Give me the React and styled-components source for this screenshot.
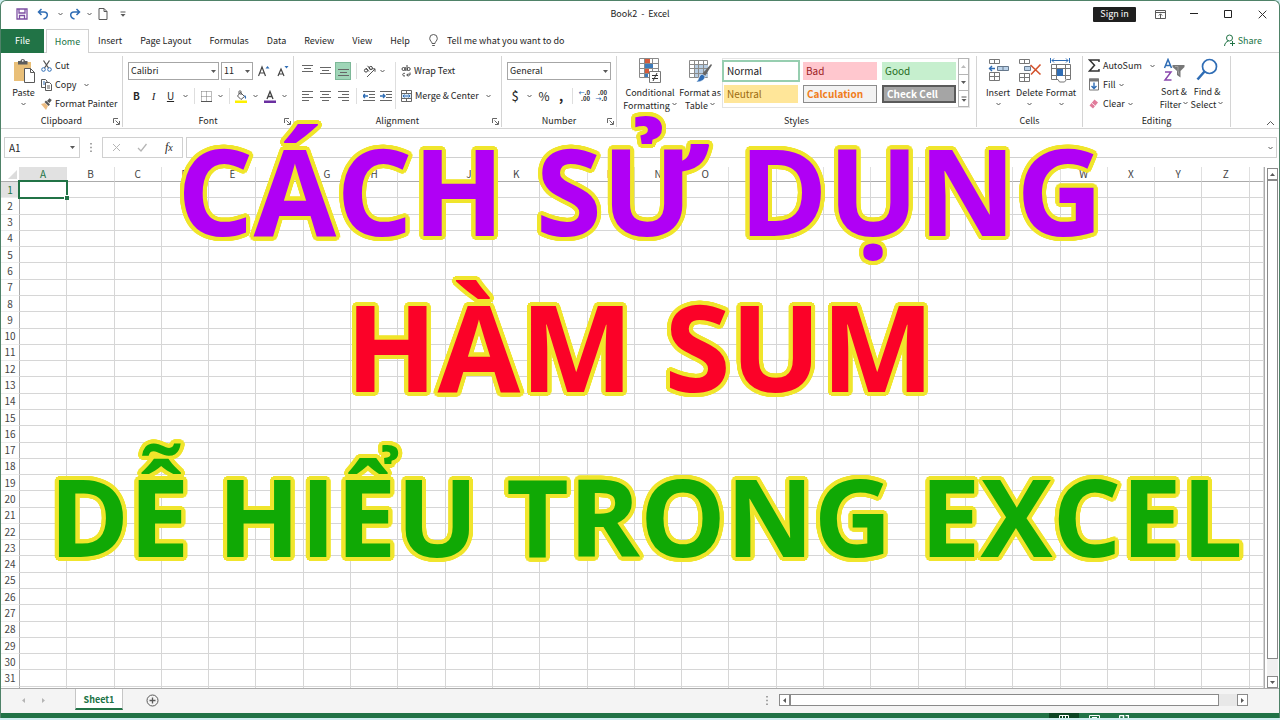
import React from "react";
import styled, { createGlobalStyle, css } from "styled-components";

const GlobalStyle = createGlobalStyle`
  *, *::before, *::after { box-sizing: border-box; }
  body { margin: 0; background: #cfeef0; }
  body, button, input, select {
    font-family: "Noto Sans CJK SC", "Noto Sans", sans-serif;
    font-size: 9px;
    line-height: 12px;
    color: #262626;
  }
  button, input, select { margin: 0; padding: 0; border: 0; background: none; }
  button { white-space: nowrap; }
`;

const green = "#217346";
const grey = "#595959";
const blue = "#2f6db5";

/* ---------- window ---------- */

const Window = styled.div`
  position: relative;
  display: flex;
  flex-direction: column;
  min-height: calc(100vh - 2px);
  border: 1px solid #4f8268;
  border-bottom: 0;
  border-radius: 6px 6px 0 0;
  background: #fff;
  overflow: hidden;
`;

const TitleBar = styled.header`
  display: grid;
  grid-template-columns: 1fr auto 1fr;
  align-items: center;
  height: 28px;
  padding-bottom: 2px;
`;

const QuickAccess = styled.div`
  display: flex;
  align-items: center;
  padding-left: 15px;
  gap: 3px;
`;

const IconButton = styled.button`
  display: flex;
  align-items: center;
  justify-content: center;
  flex: none;
  width: ${(p) => p.$w || 16}px;
  height: ${(p) => p.$h || 18}px;
  ${(p) =>
    p.$on &&
    css`
      background: #9fd5b7;
      border: 1px solid #7db898;
    `}
`;

const Title = styled.div`
  white-space: pre;
`;

const WindowButtons = styled.div`
  display: flex;
  align-items: center;
  justify-content: flex-end;
`;

const SignIn = styled.button`
  height: 15px;
  width: 43px;
  margin-right: 7px;
  border-radius: 1px;
  background: #1f1f1f;
  color: #fff;
`;

/* ---------- tabs ---------- */

const TabBar = styled.nav`
  display: flex;
  height: 24px;
  border-bottom: 1px solid #d0d0d0;
`;

const Tab = styled.button`
  padding: 0 9px;
  height: 24px;
`;

const FileTab = styled(Tab)`
  width: 43px;
  padding: 0;
  margin-right: 2px;
  background: ${green};
  color: #fff;
`;

const ActiveTab = styled(Tab)`
  width: 43px;
  padding: 0;
  border: 1px solid #d0d0d0;
  border-bottom: 0;
  background: #fff;
  color: ${green};
`;

const TellMe = styled.button`
  display: flex;
  align-items: center;
  gap: 9px;
  margin-left: 10px;
`;

const Share = styled.button`
  display: flex;
  align-items: center;
  gap: 3px;
  margin: 0 17px 0 auto;
  color: ${green};
`;

/* ---------- ribbon ---------- */

const Ribbon = styled.div`
  display: flex;
  position: relative;
  height: 76px;
  padding: 3px 0 1px;
  border-bottom: 1px solid #d4d4d4;
`;

const GroupBox = styled.section`
  display: flex;
  flex-direction: column;
  flex: none;
  width: ${(p) => p.$w}px;
  border-right: 1px solid #d4d4d4;
`;

const GroupBody = styled.div`
  display: flex;
  flex: 1;
  padding: 0 5px;
`;

const GroupFooter = styled.div`
  position: relative;
  height: 12px;
  text-align: center;
`;

const Launcher = styled.button`
  position: absolute;
  right: 1px;
  top: 3px;
  width: 8px;
  height: 8px;
  display: flex;
`;

const BigButton = styled.button`
  display: flex;
  flex-direction: column;
  align-items: center;
  flex: none;
  width: ${(p) => p.$w}px;
  padding-top: 2px;
  line-height: 13px;
  svg:first-child { margin-bottom: 3px; }
`;

const WordLine = styled.span`
  display: flex;
  align-items: center;
  justify-content: center;
  gap: 2px;
  height: 13px;
`;

const Stack = styled.div`
  display: flex;
  flex-direction: column;
  width: ${(p) => p.$w}px;
`;

const SmallButton = styled.button`
  display: flex;
  align-items: center;
  gap: 3px;
  height: 19px;
  svg:last-child { margin-left: ${(p) => p.$gap || 0}px; }
`;

const Rows = styled.div`
  display: flex;
  flex-direction: column;
  gap: 7px;
  padding-top: 6px;
`;

const Row = styled.div`
  display: flex;
  align-items: center;
  gap: ${(p) => p.$gap || 0}px;
  height: 18px;
`;

const Divider = styled.span`
  width: 1px;
  height: 16px;
  margin: 0 3px;
  background: #dedede;
`;

const TallDivider = styled.span`
  width: 1px;
  margin: 6px 5px 6px 1px;
  background: #dedede;
`;

const SelectBox = styled.label`
  position: relative;
  display: block;
  width: ${(p) => p.$w}px;
  height: 18px;
  border: 1px solid #a6a6a6;
  select {
    appearance: none;
    width: 100%;
    height: 16px;
    padding-left: 2px;
    outline: 0;
  }
  svg { position: absolute; right: 2px; top: 6px; pointer-events: none; }
`;

const Glyph = styled.span`
  font-size: ${(p) => p.$size || 10}px;
  font-weight: ${(p) => (p.$bold ? 700 : 400)};
  font-style: ${(p) => (p.$italic ? "italic" : "normal")};
  font-family: ${(p) => (p.$serif ? '"Liberation Serif", serif' : "inherit")};
  text-decoration: ${(p) => (p.$underline ? "underline" : "none")};
`;

/* ---------- style gallery ---------- */

const Gallery = styled.div`
  display: flex;
  height: 50px;
  margin-top: 2px;
  border: 1px solid #e3e3e3;
`;

const Swatches = styled.div`
  display: grid;
  grid-template-columns: repeat(3, 74px);
  grid-auto-rows: 18px;
  gap: 5px;
  padding: 3px 2px 4px 1px;
`;

const Swatch = styled.button`
  padding-left: 3px;
  text-align: left;
  font-size: 10px;
  background: ${(p) => p.$bg};
  color: ${(p) => p.$fg};
  font-weight: ${(p) => (p.$bold ? 700 : 400)};
  border: ${(p) => p.$border || "0"};
  outline: ${(p) => (p.$selected ? "2px solid #97ceb0" : "0")};
`;

const GalleryScroll = styled.div`
  display: flex;
  flex-direction: column;
  width: 11px;
  button {
    flex: 1;
    display: flex;
    align-items: center;
    justify-content: center;
    border: 1px solid #b5b5b5;
    margin-top: -1px;
  }
`;

const Collapse = styled.button`
  position: absolute;
  right: 4px;
  bottom: 2px;
  display: flex;
`;

/* ---------- formula bar ---------- */

const FormulaBar = styled.div`
  display: flex;
  align-items: flex-start;
  height: 38px;
  padding: 8px 2px 0 3px;
`;

const NameBox = styled.label`
  position: relative;
  width: 76px;
  height: 21px;
  border: 1px solid #d0d0d0;
  input { width: 60px; height: 19px; padding-left: 4px; outline: 0; font-size: 10px; }
  svg { position: absolute; right: 4px; top: 7px; }
`;

const Dots = styled.span`
  display: flex;
  align-items: center;
  justify-content: center;
  width: ${(p) => p.$w || 22}px;
  height: 21px;
`;

const EntryButtons = styled.div`
  display: flex;
  align-items: center;
  justify-content: space-around;
  width: 81px;
  height: 21px;
  margin-right: 3px;
  border: 1px solid #d0d0d0;
`;

const FormulaInput = styled.label`
  position: relative;
  flex: 1;
  height: 21px;
  border: 1px solid #d0d0d0;
  input { width: 95%; height: 19px; outline: 0; }
  svg { position: absolute; right: 3px; top: 8px; }
`;

/* ---------- grid ---------- */

const SheetArea = styled.main`
  display: flex;
  flex: 1;
`;

const Sheet = styled.table`
  flex: 1;
  width: 100%;
  table-layout: fixed;
  border-collapse: separate;
  border-spacing: 0;
  border-right: 1px solid #ababab;
  font-size: 10px;
  line-height: 12px;
  color: #444;
  th { padding: 0; font-weight: 400; }
  thead th {
    height: 15px;
    border-right: 1px solid #e0e0e0;
    border-bottom: 1px solid #ababab;
  }
  tbody th {
    height: 16px;
    border-right: 1px solid #ababab;
    border-bottom: 1px solid #ececec;
  }
  td {
    padding: 0;
    border-right: 1px solid #d6d6d6;
    border-bottom: 1px solid #d6d6d6;
  }
  tbody tr:last-child > * { height: 1px; border-bottom: 0; }
`;

const HeadCell = styled.th`
  ${(p) => p.$on && css`background: #e1e1e1; color: ${green};`}
`;

const Corner = styled.th`
  svg { display: block; margin: 3px 2px 2px auto; }
`;

const Cell = styled.td`
  ${(p) =>
    p.$selected &&
    css`
      position: relative;
      &::before {
        content: "";
        position: absolute;
        inset: -2px;
        border: 2px solid ${green};
      }
      &::after {
        content: "";
        position: absolute;
        right: -3px;
        bottom: -3px;
        width: 5px;
        height: 5px;
        background: ${green};
        border: 1px solid #fff;
        border-width: 1px 0 0 1px;
      }
    `}
`;

const VScroll = styled.div`
  display: flex;
  flex-direction: column;
  flex: none;
  width: 14px;
  padding: 1px 1px 0 2px;
`;

const ScrollButton = styled.button`
  display: flex;
  align-items: center;
  justify-content: center;
  flex: none;
  width: 11px;
  height: 12px;
  border: 1px solid #8a8a8a;
  background: #fff;
`;

const VTrack = styled.div`
  flex: 1;
  padding-bottom: 17px;
  background: #f0f0f0;
`;

const Thumb = styled.div`
  height: 100%;
  border: 1px solid #8a8a8a;
  background: #fff;
`;

/* ---------- footer ---------- */

const SheetBar = styled.footer`
  display: flex;
  height: 25px;
  border-top: 1px solid #ababab;
  background: #f4f4f4;
`;

const SheetNav = styled.div`
  display: flex;
  align-items: center;
  justify-content: center;
  gap: 4px;
  width: 74px;
  padding-right: 10px;
  height: 22px;
`;

const SheetTab = styled.button`
  width: 48px;
  height: 21px;
  padding-top: 3px;
  border: solid #c6c6c6;
  border-width: 0 1px;
  border-bottom: 2px solid ${green};
  background: #fff;
  color: ${green};
  font-size: 9px;
  font-weight: 700;
`;

const AddSheet = styled.button`
  display: flex;
  align-items: center;
  height: 22px;
  margin-left: 23px;
`;

const HScroll = styled.div`
  display: flex;
  align-items: center;
  width: 41%;
  height: 22px;
  margin-left: auto;
  padding-right: 31px;
`;

const HTrack = styled.div`
  flex: 1;
  height: 12px;
  padding-right: 18px;
  background: #e8e8e8;
`;

const StatusBar = styled.div`
  display: flex;
  justify-content: flex-end;
  height: 5px;
  padding-right: 110px;
  background: ${green};
  overflow: hidden;
`;

const ViewMode = styled.button`
  display: flex;
  justify-content: center;
  width: 30px;
  padding-top: 2px;
  background: ${(p) => (p.$on ? "#0c4523" : "none")};
`;

/* ---------- headline ---------- */

const outline = [
  [4, 0], [4, 1], [3, 2], [3, 3], [2, 3], [1, 4], [0, 4],
]
  .flatMap(([x, y]) => [[x, y], [-x, y], [x, -y], [-x, -y]])
  .map(([x, y]) => `${x}px ${y}px 0 #f0e52c`)
  .join(", ");

const Headline = styled.h1`
  position: absolute;
  inset: 0;
  margin: 0;
  padding-top: 111px;
  display: flex;
  flex-direction: column;
  align-items: center;
  font-family: "Open Sans", "Noto Sans", sans-serif;
  font-weight: 700;
  white-space: nowrap;
  pointer-events: none;
`;

const HeadlineRow = styled.span`
  font-size: ${(p) => p.$size}px;
  line-height: 156px;
  color: ${(p) => p.$color};
  text-shadow: ${outline};
  &:last-child { margin: 14px 0 0 12px; }
`;

/* ---------- icons ---------- */

const Svg = ({ w = 12, h = w, children, ...rest }) => (
  <svg width={w} height={h} viewBox={`0 0 ${w} ${h}`} fill="none" stroke={grey} aria-hidden="true" {...rest}>
    {children}
  </svg>
);

const Chevron = () => (
  <Svg w={5} h={4}><path d="M.5 1l2 2 2-2" /></Svg>
);
const Caret = ({ dir = "down", color = grey }) => {
  const d = { down: "M0 1h5L2.500 4z", up: "M0 4h5L2.500 1z", left: "M4 0v5L1 2.500z", right: "M1 0v5l3-2.500z" }[dir];
  return <Svg w={5}><path d={d} fill={color} stroke="none" /></Svg>;
};
const MoreCaret = () => (
  <Svg w={6} h={6}><path d="M.5 1h5" /><path d="M.5 3h5L3 5.800z" fill={grey} stroke="none" /></Svg>
);
const SaveIcon = () => (
  <Svg w={12} stroke="#7d4fa3" strokeWidth="1.300"><path d="M1 1h10v10H1zM3 1v4h6V1M3.500 11V7.500h5V11" /></Svg>
);
const UndoIcon = ({ flip }) => (
  <Svg w={12} stroke={blue} strokeWidth="1.500">
    <g transform={flip ? "matrix(-1 0 0 1 12 0)" : undefined}><path d="M4.500 1L1.500 4l3 3M1.500 4h5.500c4.500 0 4.500 5.500-.5 7" /></g>
  </Svg>
);
const PageIcon = () => (
  <Svg w={10} h={12}><path d="M1 .5h5l3 3v8H1zM6 .5v3h3" /></Svg>
);
const RibbonModeIcon = () => (
  <Svg w={11} h={9}><path d="M.5.5h10v8H.5zM.5 2.500h10M5.500 8V4M3.800 5.500l1.700-1.700 1.700 1.700" /></Svg>
);
const MinIcon = () => <Svg w={8}><path d="M0 3.500h8" stroke="#222" /></Svg>;
const MaxIcon = () => <Svg w={9}><path d="M.5.5h7v7h-7z" stroke="#222" /></Svg>;
const CloseIcon = () => <Svg w={9}><path d="M.7.7l7.600 7.600M8.300.7L.7 8.300" stroke="#333" /></Svg>;
const BulbIcon = () => (
  <Svg w={9} h={13}><path d="M3 9.500C3 7.500.7 7 .7 4.300a3.800 3.800 0 0 1 7.600 0C8.300 7 6 7.500 6 9.500zM3.200 11.500h2.600" /></Svg>
);
const ShareIcon = () => (
  <Svg w={11} h={13} stroke={green}><circle cx="5.500" cy="4" r="3" /><path d="M.5 12C.8 9 2.500 7.500 4.500 7M8.500 7v5M6 9.500h5" /></Svg>
);
const PasteIcon = () => (
  <Svg w={22} h={25}>
    <path d="M1 4h17v19H1z" fill="#e9bf78" stroke="none" />
    <path d="M5 3h2.500C7.500.2 12 .2 12 3h2.500v3.500H5z" fill="#5d5d5d" stroke="none" />
    <circle cx="9.750" cy="2.800" r=".9" fill="#fff" stroke="none" />
    <path d="M11.500 10.500h6l4 4v10h-10zM17.500 10.500v4h4" fill="#fff" />
  </Svg>
);
const CutIcon = () => (
  <Svg w={11} h={12}><path d="M2.500.5l5 7.500M8.500.5l-5 7.500" stroke="#555" strokeWidth="1.300" /><circle cx="2.500" cy="9.500" r="1.800" stroke={blue} /><circle cx="8.500" cy="9.500" r="1.800" stroke={blue} /></Svg>
);
const CopyIcon = () => (
  <Svg w={11} h={12}><path d="M4 8.500H.5v-8h4l1.500 1.500v1" /><path d="M4.500 3.500h4l2 2v6h-6zM6 7h3M6 9h3" /><path d="M2 3h2M2 5h2" stroke={blue} /></Svg>
);
const PainterIcon = () => (
  <Svg w={11} h={12}><path d="M0 6l4-1 3 3-2 4z" fill="#edbd83" stroke="none" /><path d="M3.500 4l1.500-1.500L9 6.500 7.500 8zM6 3l2.500-2.800L10.800 2 8.500 5z" fill="#555" stroke="none" /></Svg>
);
const LaunchIcon = () => (
  <Svg w={7} stroke="#666"><path d="M.5 5V.5H5M2.500 2.500l3.500 3.500M6.500 3v3.500H3" /></Svg>
);
const GrowFont = ({ down }) => (
  <Svg w={12} h={12}>
    <path d={down ? "M1 11l3-7 3 7M2 9h4" : "M.5 11L4 2l3.500 9M1.800 8h4.500"} stroke="#444" strokeWidth="1.200" />
    <path d={down ? "M7.500 1h4L9.500 3.500z" : "M7.500 3.500h4L9.500 1z"} fill={blue} stroke="none" />
  </Svg>
);
const BorderIcon = () => (
  <Svg w={11}><path d="M.5.5h10v10M.5.5v10M5.500.5v10M.5 5.500h10" strokeDasharray="1 1" stroke="#777" /><path d="M0 10.500h11" stroke="#555" /></Svg>
);
const FillColorIcon = () => (
  <Svg w={12} h={13}><path d="M5.500 2.500l4 4-3.500 3-3.500-3.500zM4 4V1.500c0-1 2-1 2 0V5" stroke="#555" /><path d="M9.500 5c1.500.5 1.800 2 1.500 4-1-.5-1.800-2-1.500-4z" fill={blue} stroke="none" /><path d="M0 10.500h12v2.500H0z" fill="#fdf000" stroke="none" /></Svg>
);
const FontColorIcon = () => (
  <Svg w={12} h={13}><path d="M3 9l3-7.500L9 9M4 6.500h4" stroke="#444" strokeWidth="1.300" /><path d="M0 10.500h12v2.500H0z" fill="#6a2fa0" stroke="none" /></Svg>
);
const lineSets = {
  top: "M0 1.500h11M2 4.500h7M0 7.500h11",
  middle: "M0 3.500h11M2 6.500h7M0 9.500h11",
  bottom: "M0 5.500h11M2 8.500h7M0 11.500h11",
  left: "M0 2.500h11M0 5.500h7M0 8.500h11M0 11.500h7",
  center: "M0 2.500h11M2 5.500h7M0 8.500h11M2 11.500h7",
  right: "M0 2.500h11M4 5.500h7M0 8.500h11M4 11.500h7",
};
const LinesIcon = ({ kind }) => (
  <Svg w={11} h={14}><path d={lineSets[kind]} stroke="#666" /></Svg>
);
const OrientIcon = () => (
  <Svg w={13} h={13}><path d="M4 12L12 4M9 3.800h3v3" stroke="#555" /><circle cx="3" cy="5.500" r="1.600" stroke="#444" /><path d="M3 3l3 3.500" stroke="#444" /><path d="M4.500.8l3.500 4" stroke="#444" /><circle cx="7.800" cy="3" r="1.600" stroke="#444" /></Svg>
);
const IndentIcon = ({ out }) => (
  <Svg w={12} h={12}><path d="M0 1.500h12M6 4.500h6M6 7.500h6M0 10.500h12" stroke="#666" /><path d={out ? "M0 6h5M3 4l2 2-2 2" : "M0 6h5M2 4L0 6l2 2"} stroke={blue} strokeWidth="1.300" /></Svg>
);
const WrapIcon = () => (
  <Svg w={10} h={12}><circle cx="2.500" cy="4" r="1.500" stroke="#444" /><path d="M4.200 2v4M6 0v6" stroke="#444" /><circle cx="7.700" cy="4" r="1.500" stroke="#444" /><path d="M4 8.500c-3-1.200-3 3.400 0 2.400M9 7.500v2.500H6M7.200 8.500L5.700 10l1.500 1.500" stroke="#444" /></Svg>
);
const MergeIcon = () => (
  <Svg w={11} h={12}><path d="M.5.5h10v11H.5zM.5 3.500h10M.5 8.500h10M5.500.5v3M5.500 8.500v3" stroke="#666" /><path d="M1 4h9v4H1z" fill="#dcebf8" stroke="none" /><path d="M2 6h7M3.500 4.500L2 6l1.500 1.500M7.500 4.500L9 6 7.500 7.500" stroke={blue} /></Svg>
);
const Decimals = styled.span`
  display: grid;
  width: 12px;
  font-size: 6px;
  line-height: 6px;
  font-weight: 700;
  text-align: right;
  i { font-style: normal; color: ${blue}; }
`;
const CondIcon = () => (
  <Svg w={22} h={25}>
    <path d="M.5.5h19v19H.5zM.5 5.500h19M.5 10.500h19M.5 15.500h19M5.500.5v19M13.500.5v19" fill="#fff" stroke="#8a8a8a" />
    <path d="M6 1h5v4H6zM6 11h4v4H6z" fill="#d65b3b" stroke="none" /><path d="M6 6h8v4H6zM6 16h3v3H6z" fill="#3f7cba" stroke="none" />
    <path d="M10.500 13.500h11v11h-11z" fill="#fff" stroke="#777" /><path d="M13 17.500h6M13 20.500h6M18 15l-4 8" stroke="#333" />
  </Svg>
);
const TableIcon = () => (
  <Svg w={23} h={25}>
    <path d="M.5 2.500h18v17H.5z" fill="#fff" stroke="#8a8a8a" /><path d="M5 7h14v12H5z" fill="#b7cde3" stroke="none" />
    <path d="M.5 6.500h18M.5 10.500h18M.5 15.500h18M5.500 2.500v17M9.500 2.500v17M14.500 2.500v17" stroke="#8a8a8a" />
    <path d="M22 6l1 1-7 11-3-2z" fill="#666" stroke="none" /><path d="M13 16l3 2c0 4-4 6-9 6 3-1 2-6 6-8z" fill={blue} stroke="#fff" strokeWidth=".6" />
  </Svg>
);
const InsertIcon = () => (
  <Svg w={22} h={25}><path d="M2.500 1.500h10v4h-10zM7.500 1.500v4M2.500 14.500h10v8h-10zM2.500 18.500h10M7.500 14.500v8" stroke="#777" /><path d="M10.500 8.500h11v4h-11zM16 8.500v4" fill="#bcd3ea" stroke="#66788c" /><path d="M2.500 10.500H8M5 8l-2.500 2.500L5 13" stroke={blue} strokeWidth="1.400" /></Svg>
);
const DeleteIcon = () => (
  <Svg w={24} h={25}><path d="M1.500 1.500h10v4h-10zM6.500 1.500v4M1.500 15.500h10v8h-10zM1.500 19.500h10M6.500 15.500v8" stroke="#777" /><path d="M6.500 8.500h6v4h-6z" fill="#bcd3ea" stroke="#66788c" /><path d="M12.500 7l10 9.500M22.500 6.500l-9.500 10" stroke="#d4532d" strokeWidth="1.600" /></Svg>
);
const FormatIcon = () => (
  <Svg w={22} h={25}><path d="M2 2.500h16M4 .5L2 2.500l2 2M16 .5l2 2-2 2M.5 0v5M19.500 0v5" stroke={blue} /><path d="M1.500 6.500h19v15h-4l-2 2.500h-5l-1.500-2.500H1.500zM1.500 10.500h19M1.500 17.500h19M6.500 6.500v15M15.500 6.500v15" stroke="#777" /><path d="M7 11h6v7H7z" fill={blue} stroke="none" /></Svg>
);
const SumIcon = () => <Svg w={12} h={13}><path d="M11 3V1H1.500l5 5.300-5 5.700H11v-2" stroke="#333" strokeWidth="1.500" /></Svg>;
const FillIcon = () => (
  <Svg w={12} h={13}><path d="M1.500 1h9v11h-9z" fill="#fff" stroke="#777" /><path d="M1 .5h10v3H1z" fill="#777" stroke="none" /><path d="M6 4.500v6M3.500 8L6 10.500 8.500 8" stroke={blue} strokeWidth="1.400" /></Svg>
);
const EraserIcon = () => (
  <Svg w={12} h={12}><path d="M6.500 1.500l3.500 3-5 6-3.500-3z" fill="#e17c9b" stroke="none" /><path d="M3.800 5L7.200 8" stroke="#fff" strokeWidth=".8" /></Svg>
);
const SortIcon = () => (
  <Svg w={22} h={24}><path d="M1.500 10L5 1.500 8.500 10M2.800 7.500h4.400" stroke={blue} strokeWidth="1.500" /><path d="M2 14h6l-6 8h6.500" stroke="#8a48ad" strokeWidth="1.500" /><path d="M9.500 7h12v2l-4 4v6.500l-3.500-2.500v-4l-4.500-4z" fill="#777" stroke="none" /><path d="M12 8.500h3v4l1 4" stroke="#aaa" strokeWidth=".8" /></Svg>
);
const FindIcon = () => (
  <Svg w={22} h={24}><circle cx="13.500" cy="8.500" r="7" stroke={blue} strokeWidth="1.700" /><path d="M8.500 13.500L1.500 21.500" stroke={blue} strokeWidth="2.600" /></Svg>
);
const DotsIcon = () => <Svg w={2} h={9}><path d="M1 0v9" strokeDasharray="1.500 2.250" stroke="#888" strokeWidth="1.500" /></Svg>;

/* ---------- pieces ---------- */

const Group = ({ label, width, launcher, children }) => (
  <GroupBox $w={width} aria-label={label}>
    <GroupBody>{children}</GroupBody>
    <GroupFooter>
      {label}
      {launcher && <Launcher aria-label={`${label} settings`}><LaunchIcon /></Launcher>}
    </GroupFooter>
  </GroupBox>
);

const Drop = ({ label, w = 16 }) => <IconButton $w={w} aria-label={label}><Chevron /></IconButton>;

const Combo = ({ label, value, width }) => (
  <SelectBox $w={width}>
    <select aria-label={label} defaultValue={value}><option>{value}</option></select>
    <Caret />
  </SelectBox>
);

const columns = "ABCDEFGHIJKLMNOPQRSTUVWXYZ".split("");
const rows = Array.from({ length: 31 }, (_, i) => i + 1);

const swatches = [
  { name: "Normal", $bg: "#fff", $fg: "#222", $selected: true },
  { name: "Bad", $bg: "#ffc7ce", $fg: "#9c1c24" },
  { name: "Good", $bg: "#c6efce", $fg: "#1f6b22" },
  { name: "Neutral", $bg: "#ffe699", $fg: "#9c6a10" },
  { name: "Calculation", $bg: "#f2f2f2", $fg: "#f07d1a", $bold: true, $border: "1px solid #8c8c8c" },
  { name: "Check Cell", $bg: "#a5a5a5", $fg: "#fff", $bold: true, $border: "2px solid #5a5a5a" },
];

export default function App() {
  return (
    <>
      <GlobalStyle />
      <Window>
        <TitleBar>
          <QuickAccess>
            <IconButton $w={12} aria-label="Save"><SaveIcon /></IconButton>
            <IconButton $w={24} aria-label="Undo"><UndoIcon /></IconButton>
            <Drop w={5} label="Undo history" />
            <IconButton $w={18} aria-label="Redo"><UndoIcon flip /></IconButton>
            <Drop w={5} label="Redo history" />
            <IconButton $w={16} aria-label="New"><PageIcon /></IconButton>
            <IconButton $w={18} aria-label="Customize toolbar"><MoreCaret /></IconButton>
          </QuickAccess>
          <Title>{"Book2  -  Excel"}</Title>
          <WindowButtons>
            <SignIn>Sign in</SignIn>
            <IconButton $w={34} aria-label="Ribbon display"><RibbonModeIcon /></IconButton>
            <IconButton $w={34} aria-label="Minimize"><MinIcon /></IconButton>
            <IconButton $w={34} aria-label="Maximize"><MaxIcon /></IconButton>
            <IconButton $w={34} aria-label="Close"><CloseIcon /></IconButton>
          </WindowButtons>
        </TitleBar>

        <TabBar>
          <FileTab>File</FileTab>
          <ActiveTab>Home</ActiveTab>
          {["Insert", "Page Layout", "Formulas", "Data", "Review", "View", "Help"].map((t) => <Tab key={t}>{t}</Tab>)}
          <TellMe><BulbIcon />Tell me what you want to do</TellMe>
          <Share><ShareIcon />Share</Share>
        </TabBar>

        <Ribbon>
          <Group label="Clipboard" width={122} launcher>
            <BigButton $w={35}><PasteIcon /><WordLine>Paste</WordLine><WordLine><Chevron /></WordLine></BigButton>
            <Stack $w={78}>
              <SmallButton><CutIcon />Cut</SmallButton>
              <SmallButton $gap={5}><CopyIcon />Copy<Chevron /></SmallButton>
              <SmallButton><PainterIcon />Format Painter</SmallButton>
            </Stack>
          </Group>

          <Group label="Font" width={171} launcher>
            <Rows>
              <Row $gap={2}>
                <Combo label="Font name" value="Calibri" width={91} />
                <Combo label="Font size" value="11" width={32} />
                <IconButton $w={18} aria-label="Increase font size"><GrowFont /></IconButton>
                <IconButton $w={16} aria-label="Decrease font size"><GrowFont down /></IconButton>
              </Row>
              <Row>
                <IconButton $w={17} aria-label="Bold"><Glyph $bold>B</Glyph></IconButton>
                <IconButton $w={17} aria-label="Italic"><Glyph $italic $serif $size={11}>I</Glyph></IconButton>
                <IconButton $w={17} aria-label="Underline"><Glyph $underline>U</Glyph></IconButton>
                <Drop w={12} label="Underline style" />
                <Divider />
                <IconButton $w={16} aria-label="Borders"><BorderIcon /></IconButton>
                <Drop w={12} label="Border style" />
                <Divider />
                <IconButton $w={16} aria-label="Fill color"><FillColorIcon /></IconButton>
                <Drop w={12} label="Fill colors" />
                <IconButton $w={18} aria-label="Font color"><FontColorIcon /></IconButton>
                <Drop w={10} label="Font colors" />
              </Row>
            </Rows>
          </Group>

          <Group label="Alignment" width={208} launcher>
            <Rows>
              <Row $gap={2}>
                <IconButton aria-label="Top align"><LinesIcon kind="top" /></IconButton>
                <IconButton aria-label="Middle align"><LinesIcon kind="middle" /></IconButton>
                <IconButton $on aria-label="Bottom align"><LinesIcon kind="bottom" /></IconButton>
                <Divider />
                <IconButton $w={14} aria-label="Orientation"><OrientIcon /></IconButton>
                <Drop w={8} label="Orientation options" />
              </Row>
              <Row $gap={2}>
                <IconButton aria-label="Align left"><LinesIcon kind="left" /></IconButton>
                <IconButton aria-label="Center"><LinesIcon kind="center" /></IconButton>
                <IconButton aria-label="Align right"><LinesIcon kind="right" /></IconButton>
                <Divider />
                <IconButton $w={14} aria-label="Decrease indent"><IndentIcon /></IconButton>
                <IconButton aria-label="Increase indent"><IndentIcon out /></IconButton>
              </Row>
            </Rows>
            <TallDivider />
            <Rows>
              <Row><SmallButton><WrapIcon />Wrap Text</SmallButton></Row>
              <Row><SmallButton $gap={4}><MergeIcon />Merge &amp; Center<Chevron /></SmallButton></Row>
            </Rows>
          </Group>

          <Group label="Number" width={115} launcher>
            <Rows>
              <Combo label="Number format" value="General" width={104} />
              <Row>
                <IconButton aria-label="Currency"><Glyph $size={13}>$</Glyph></IconButton>
                <Drop w={12} label="Currency options" />
                <IconButton $w={18} aria-label="Percent"><Glyph $size={12}>%</Glyph></IconButton>
                <IconButton aria-label="Comma"><Glyph $bold $size={13}>,</Glyph></IconButton>
                <Divider />
                <IconButton $w={16} aria-label="Increase decimal"><Decimals><span><i>←</i>.0</span><span>.00</span></Decimals></IconButton>
                <IconButton $w={18} aria-label="Decrease decimal"><Decimals><span>.00</span><span><i>→</i>.0</span></Decimals></IconButton>
              </Row>
            </Rows>
          </Group>

          <Group label="Styles" width={360}>
            <BigButton $w={56}><CondIcon /><WordLine>Conditional</WordLine><WordLine>Formatting <Chevron /></WordLine></BigButton>
            <BigButton $w={44}><TableIcon /><WordLine>Format as</WordLine><WordLine>Table <Chevron /></WordLine></BigButton>
            <Gallery>
              <Swatches>
                {swatches.map(({ name, ...s }) => <Swatch key={name} {...s}>{name}</Swatch>)}
              </Swatches>
              <GalleryScroll>
                <button aria-label="Previous styles"><Caret dir="up" color="#bbb" /></button>
                <button aria-label="Next styles"><Caret /></button>
                <button aria-label="More styles"><MoreCaret /></button>
              </GalleryScroll>
            </Gallery>
          </Group>

          <Group label="Cells" width={106}>
            <BigButton $w={32}><InsertIcon /><WordLine>Insert</WordLine><WordLine><Chevron /></WordLine></BigButton>
            <BigButton $w={31}><DeleteIcon /><WordLine>Delete</WordLine><WordLine><Chevron /></WordLine></BigButton>
            <BigButton $w={32}><FormatIcon /><WordLine>Format</WordLine><WordLine><Chevron /></WordLine></BigButton>
          </Group>

          <Group label="Editing" width={148}>
            <Stack $w={70}>
              <SmallButton $gap={5}><SumIcon />AutoSum<Chevron /></SmallButton>
              <SmallButton><FillIcon />Fill<Chevron /></SmallButton>
              <SmallButton><EraserIcon />Clear<Chevron /></SmallButton>
            </Stack>
            <BigButton $w={32}><SortIcon /><WordLine>Sort &amp;</WordLine><WordLine>Filter <Chevron /></WordLine></BigButton>
            <BigButton $w={34}><FindIcon /><WordLine>Find &amp;</WordLine><WordLine>Select <Chevron /></WordLine></BigButton>
          </Group>
          <Collapse aria-label="Collapse ribbon"><Svg w={9} h={6}><path d="M1 5l3.500-3.500L8 5" /></Svg></Collapse>
        </Ribbon>

        <FormulaBar>
          <NameBox><input aria-label="Name box" defaultValue="A1" /><Caret /></NameBox>
          <Dots><DotsIcon /></Dots>
          <EntryButtons>
            <IconButton aria-label="Cancel"><Svg w={9}><path d="M1 1l7 7M8 1L1 8" stroke="#b5b5b5" /></Svg></IconButton>
            <IconButton aria-label="Enter"><Svg w={10} h={9}><path d="M1 5l3 3 5.500-7" stroke="#b5b5b5" strokeWidth="1.300" /></Svg></IconButton>
            <IconButton aria-label="Insert function"><Glyph $italic $serif $size={12}>f<small>x</small></Glyph></IconButton>
          </EntryButtons>
          <FormulaInput><input aria-label="Formula" /><Chevron /></FormulaInput>
        </FormulaBar>

        <SheetArea>
          <Sheet>
            <colgroup>
              <col style={{ width: 19 }} />
              {columns.map((c) => <col key={c} />)}
              <col style={{ width: 14 }} />
            </colgroup>
            <thead>
              <tr>
                <Corner aria-label="Select all"><Svg w={9}><path d="M9 0v9H0z" fill="#dcdcdc" stroke="none" /></Svg></Corner>
                {columns.map((c) => <HeadCell key={c} scope="col" $on={c === "A"}>{c}</HeadCell>)}
                <th />
              </tr>
            </thead>
            <tbody>
              {rows.map((r) => (
                <tr key={r}>
                  <HeadCell scope="row" $on={r === 1}>{r}</HeadCell>
                  {columns.map((c) => <Cell key={c} $selected={r === 1 && c === "A"} />)}
                  <Cell />
                </tr>
              ))}
              <tr><th />{columns.map((c) => <Cell key={c} />)}<Cell /></tr>
            </tbody>
          </Sheet>
          <VScroll>
            <ScrollButton aria-label="Scroll up"><Caret dir="up" /></ScrollButton>
            <VTrack><Thumb /></VTrack>
            <ScrollButton aria-label="Scroll down"><Caret /></ScrollButton>
          </VScroll>
        </SheetArea>

        <SheetBar>
          <SheetNav>
            <IconButton aria-label="Previous sheet"><Caret dir="left" color="#b5b5b5" /></IconButton>
            <IconButton aria-label="Next sheet"><Caret dir="right" color="#b5b5b5" /></IconButton>
          </SheetNav>
          <SheetTab>Sheet1</SheetTab>
          <AddSheet aria-label="Add sheet"><Svg w={13}><circle cx="6.500" cy="6.500" r="5.500" /><path d="M6.500 3.500v6M3.500 6.500h6" strokeWidth="1.300" /></Svg></AddSheet>
          <HScroll>
            <Dots $w={24}><DotsIcon /></Dots>
            <ScrollButton aria-label="Scroll left"><Caret dir="left" /></ScrollButton>
            <HTrack><Thumb /></HTrack>
            <ScrollButton aria-label="Scroll right"><Caret dir="right" /></ScrollButton>
          </HScroll>
        </SheetBar>
        <StatusBar>
          <ViewMode $on aria-label="Normal view"><Svg w={10} h={8} stroke="#fff"><path d="M.5.5h9v7h-9zM3.500.5v7M6.500.5v7" /></Svg></ViewMode>
          <ViewMode aria-label="Page layout view"><Svg w={11} h={8} stroke="#fff"><path d="M.5.500h10v7M.5.5v7M3 2.500h5" /></Svg></ViewMode>
          <ViewMode aria-label="Page break view"><Svg w={10} h={8} stroke="#fff"><path d="M.5.5h4v7M.5.5v7M6.500.5h3v7" strokeWidth="1.500" /></Svg></ViewMode>
          <ViewMode aria-label="Zoom" />
        </StatusBar>

        <Headline>
          <HeadlineRow $size={120} $color="#b000f5">CÁCH SỬ DỤNG</HeadlineRow>
          <HeadlineRow $size={120} $color="#fb0228">HÀM SUM</HeadlineRow>
          <HeadlineRow $size={108} $color="#10a905">DỄ HIỂU TRONG EXCEL</HeadlineRow>
        </Headline>
      </Window>
    </>
  );
}
